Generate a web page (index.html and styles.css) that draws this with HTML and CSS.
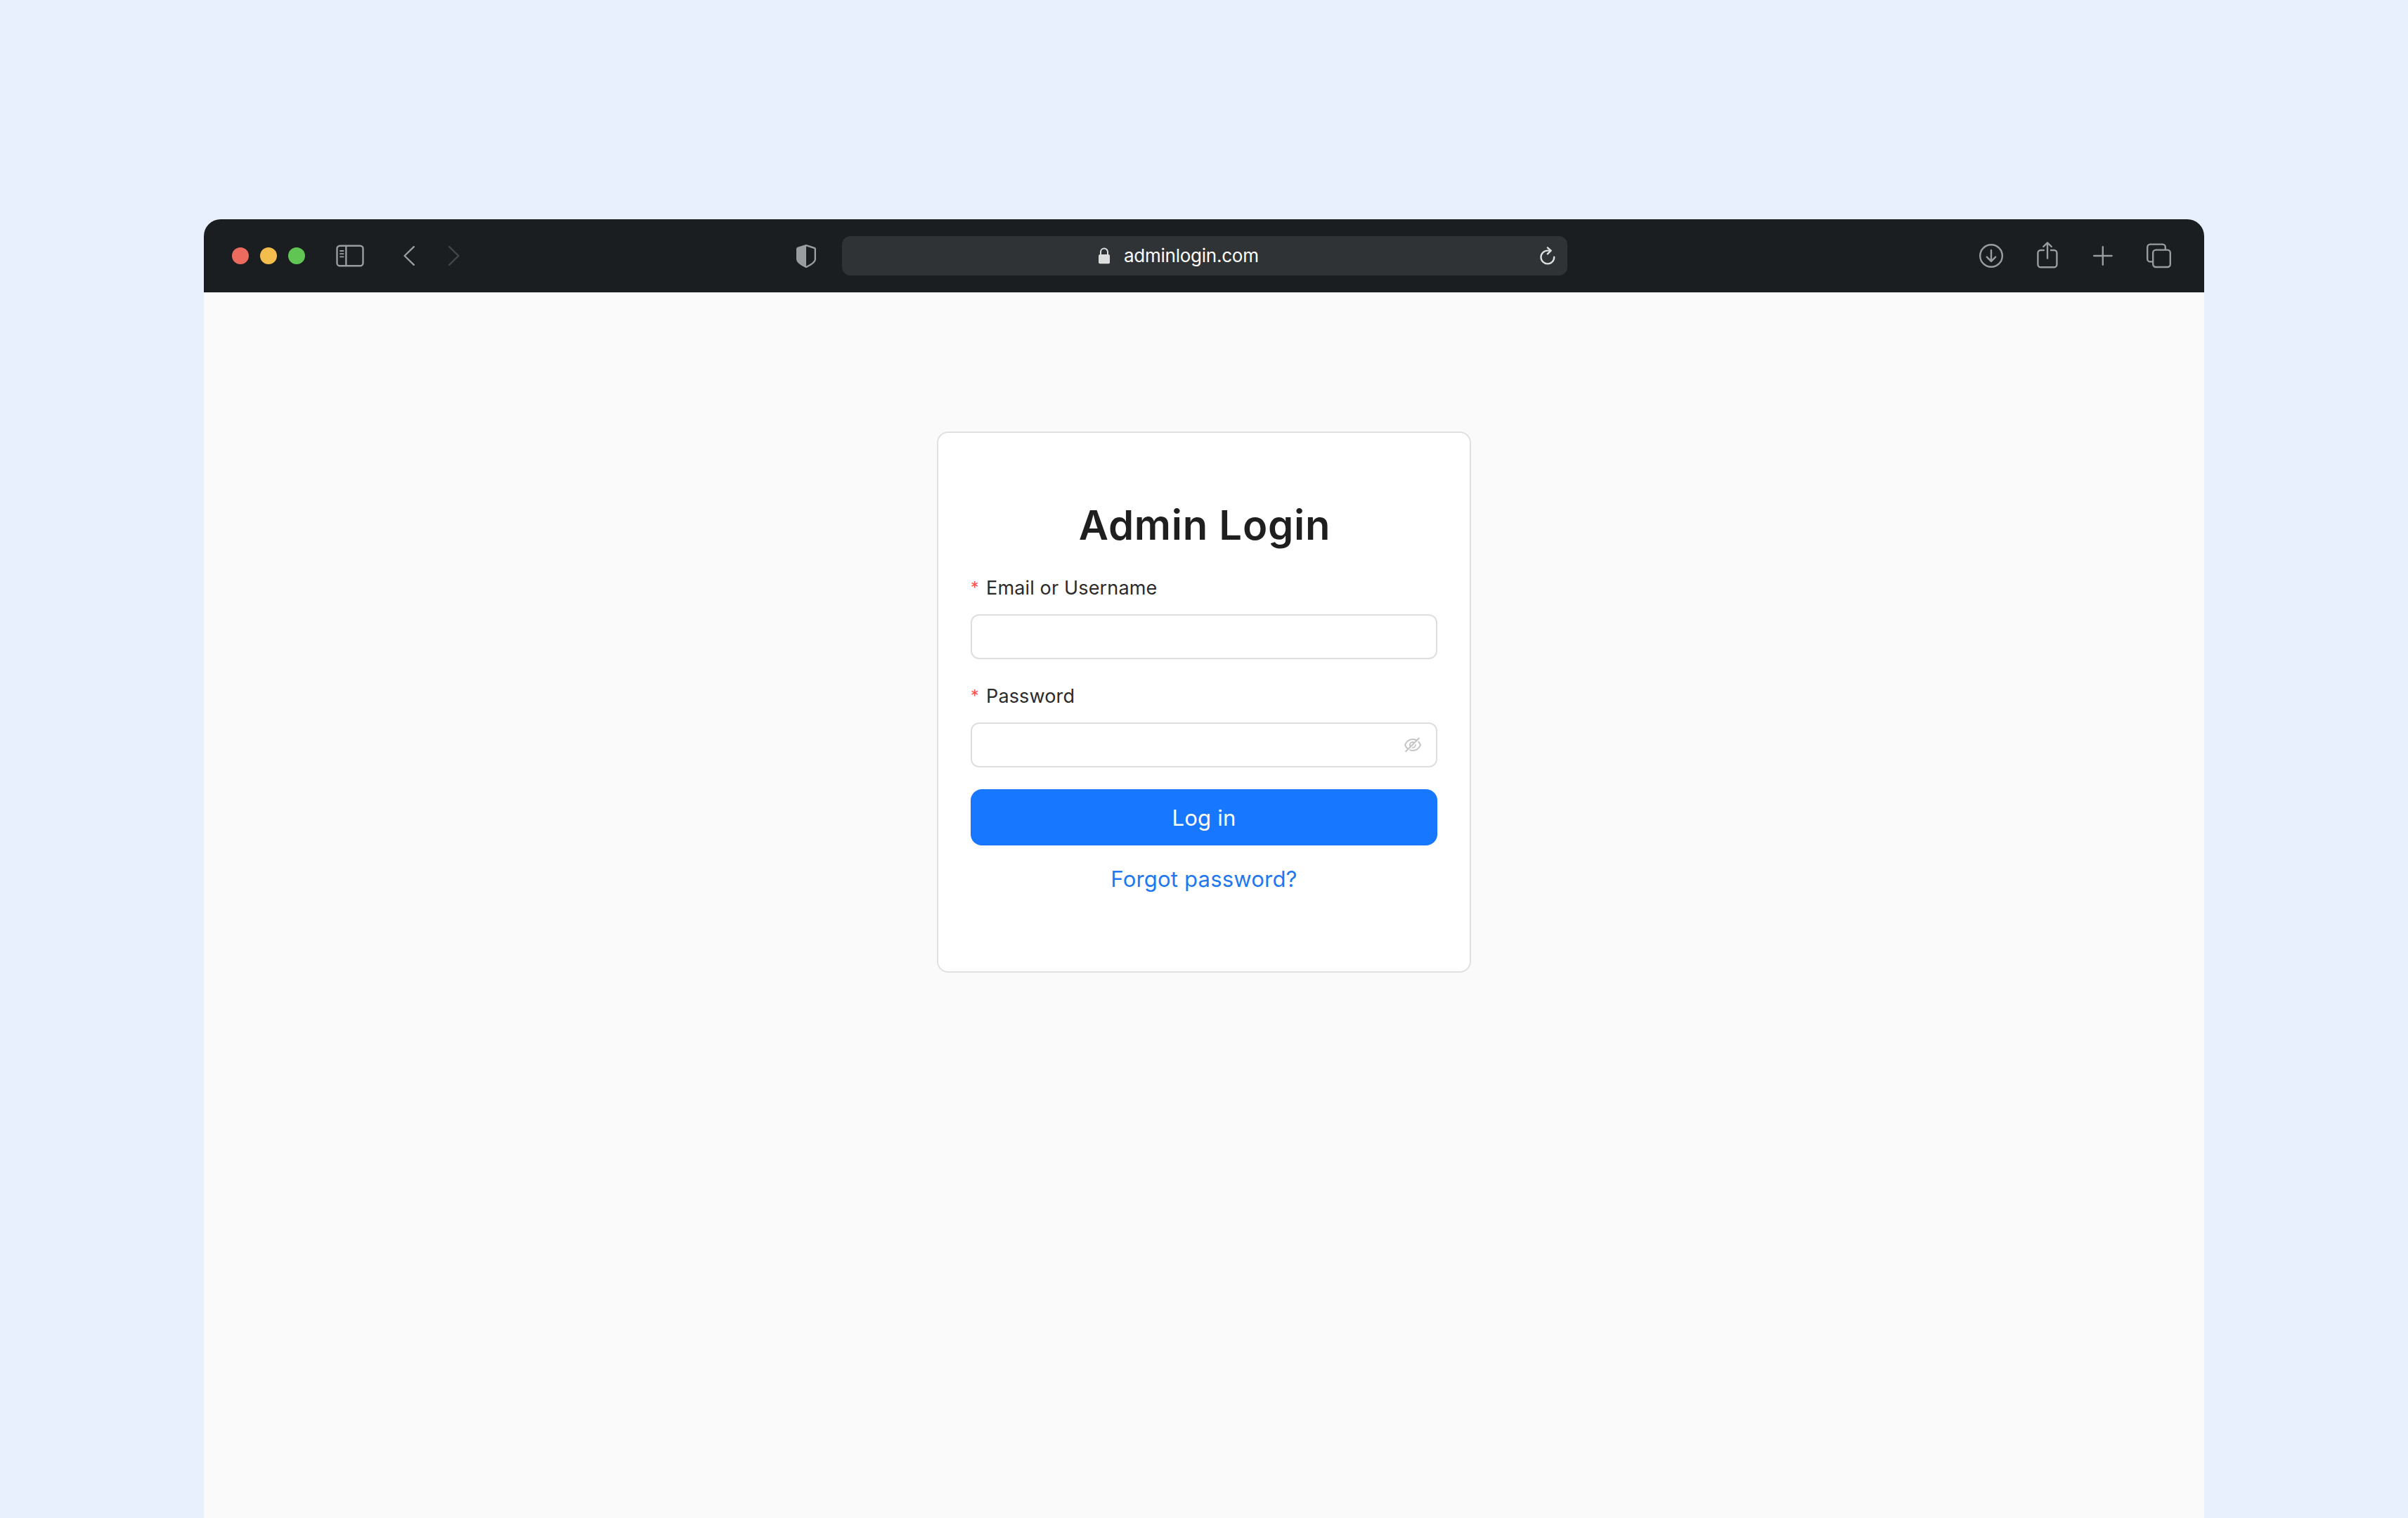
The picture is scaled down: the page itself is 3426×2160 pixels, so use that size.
FILE: index.html
```
<!doctype html>
<html lang="en">
<head>
    <meta charset="UTF-8">
    <title>Admin Login</title>
    <link rel="stylesheet" href="styles.css">
</head>
<body>
    <div class="browser">
        <div class="toolbar">
            <div class="tools-left">
                <span class="dot red"></span>
                <span class="dot yellow"></span>
                <span class="dot green"></span>
                <svg class="icon sidebar" width="40" height="32" viewBox="0 0 40 32">
                    <rect x="1.5" y="1.8" width="37" height="28.4" rx="4"/>
                    <path d="M14.4 2v28"/>
                    <path class="thin" d="M6 9h4.6M6 13.2h4.6M6 17.4h4.6"/>
                </svg>
                <svg class="icon back" width="16" height="30" viewBox="0 0 16 30"><path d="M14.8 2.2L1.6 15l13.2 12.8"/></svg>
                <svg class="icon forward" width="16" height="30" viewBox="0 0 16 30"><path d="M1.2 2.2L14.4 15 1.2 27.8"/></svg>
            </div>
            <div class="tools-center">
                <svg class="shield" width="28" height="34" viewBox="0 0 28 34">
                    <path class="line" d="M14 2.2L26 6c.5.2.8.5.8 1v15c0 4.500-6.500 8-12.800 11C7.700 30 1.200 26.500 1.200 22V7c0-.5.3-.8.8-1z"/>
                    <path class="half" d="M14 2L2 6C1.400 6.200 1 6.500 1 7v15c0 4.500 6.700 8 13 11z"/>
                </svg>
                <div class="address">
                    <svg class="lock" width="16" height="24" viewBox="0 0 16 24">
                        <path class="shackle" d="M3 11V6.500a5 5 0 0 1 10 0V11"/>
                        <rect x="0" y="10" width="16" height="13.200" rx="2"/>
                    </svg>
                    <span class="url">adminlogin.com</span>
                    <svg class="icon reload" width="22" height="28" viewBox="0 0 22 28">
                        <path d="M20.200 15.800A9.400 9.400 0 1 1 10.800 6.600h4.400"/>
                        <path d="M10.800 2.400l4.800 4.300-4.800 4.700"/>
                    </svg>
                </div>
            </div>
            <div class="tools-right">
                <svg class="icon" width="34" height="34" viewBox="0 0 34 34">
                    <circle cx="17" cy="17" r="15.800"/>
                    <path d="M17 9v15.500M10.800 18.600l6.200 6.200 6.200-6.200"/>
                </svg>
                <svg class="icon" width="30" height="40" viewBox="0 0 30 40">
                    <path d="M9.800 12H5.400a4 4 0 0 0-4 4v16.200a4 4 0 0 0 4 4h19a4 4 0 0 0 4-4V16a4 4 0 0 0-4-4H20"/>
                    <path d="M15 23.500V1.600M9.200 7L15 1.400 20.800 7"/>
                </svg>
                <svg class="icon" width="30" height="30" viewBox="0 0 30 30"><path d="M3.200 15h25.400M15.800 2.200v25.600"/></svg>
                <svg class="icon" width="35" height="36" viewBox="0 0 35 36">
                    <path d="M8.500 26.400H5.200a4 4 0 0 1-4-4V5.600a4 4 0 0 1 4-4h17.600a4 4 0 0 1 4 4v3.400"/>
                    <rect x="9.200" y="9.600" width="24.600" height="24.400" rx="4"/>
                </svg>
            </div>
        </div>
        <div class="page">
            <form class="card">
                <h1 class="title">Admin Login</h1>
                <label class="label" for="user"><span class="star">*</span>Email or Username</label>
                <div class="field"><input id="user" type="text"></div>
                <label class="label" for="pass"><span class="star">*</span>Password</label>
                <div class="field">
                    <input id="pass" type="password">
                    <svg class="eye" width="28" height="28" viewBox="0 0 1024 1024">
                        <path d="M942.2 486.2Q889.47 375.11 816.7 305l-50.88 50.88C807.31 395.53 843.45 447.4 874.7 512 791.5 684.2 673.4 766 512 766q-72.67 0-133.87-22.38L323 798.75Q408 838 512 838q288.3 0 430.2-300.3a60.29 60.29 0 000-51.5zm-63.57-320.64L836 122.88a8 8 0 00-11.32 0L715.31 232.2Q624.86 186 512 186q-288.3 0-430.2 300.3a60.3 60.3 0 000 51.5q56.69 119.4 136.5 191.41L112.48 835a8 8 0 000 11.31L155.17 889a8 8 0 0011.31 0l712.15-712.12a8 8 0 000-11.32zM149.3 512C232.6 339.8 350.7 258 512 258c54.54 0 104.13 9.36 149.12 28.39l-70.3 70.3a176 176 0 00-238.13 238.13l-83.42 83.42C223.1 637.49 183.3 582.28 149.3 512zm246.7 0a112.11 112.11 0 01146.2-106.69L401.31 546.2A112 112 0 01396 512z"/>
                        <path d="M508 624c-3.46 0-6.87-.16-10.25-.47l-52.82 52.82a176.09 176.09 0 00227.42-227.42l-52.82 52.82c.31 3.38.47 6.79.47 10.25a111.94 111.94 0 01-112 112z"/>
                    </svg>
                </div>
                <button class="login" type="button">Log in</button>
                <a class="forgot" href="#">Forgot password?</a>
            </form>
        </div>
    </div>
</body>
</html>
```
FILE: styles.css
```
*{
    margin: 0;
    padding: 0;
    box-sizing: border-box;
}
body{
    height: 2160px;
    padding: 312px 290px 0;
    background: #e8f0fe;
    font-family: Inter, "Liberation Sans", sans-serif;
    overflow: hidden;
}
.browser{
    height: 1848px;
    border-radius: 24px 24px 0 0;
    background: #fafafa;
    overflow: hidden;
}
/* toolbar */
.toolbar{
    display: grid;
    grid-template-columns: 843px 1097px 1fr;
    align-items: center;
    height: 104px;
    background: #1a1e20;
}
.tools-left,
.tools-center,
.tools-right{
    display: flex;
    align-items: center;
}
.tools-left{
    padding-left: 40px;
}
.dot{
    width: 24px;
    height: 24px;
    margin-right: 16px;
    border-radius: 50%;
}
.red{
    background: #ed6a5e;
}
.yellow{
    background: #f4be4f;
}
.green{
    background: #61c554;
}
.icon{
    fill: none;
    stroke: #9a9d9f;
    stroke-width: 2.4;
    stroke-linecap: round;
    stroke-linejoin: round;
}
.icon .thin{
    stroke-width: 1.8;
}
.sidebar{
    margin-left: 28px;
}
.back{
    margin-left: 56px;
}
.forward{
    margin-left: 48px;
    stroke: #434749;
}
.shield .half{
    fill: #9a9d9f;
}
.shield .line{
    fill: none;
    stroke: #9a9d9f;
    stroke-width: 2.4;
    stroke-linejoin: round;
}
.address{
    display: flex;
    align-items: center;
    width: 1032px;
    height: 56px;
    margin-left: 37px;
    padding: 0 17px 0 365px;
    border-radius: 12px;
    background: #2f3335;
}
.lock{
    fill: #dcdddd;
}
.lock .shackle{
    fill: none;
    stroke: #dcdddd;
    stroke-width: 2;
}
.url{
    margin-left: 20px;
    padding-bottom: 1px;
    color: #fff;
    font-size: 26px;
    letter-spacing: -.25px;
}
.reload{
    margin-left: auto;
    stroke: #dcdddd;
}
.tools-right{
    justify-content: flex-end;
    gap: 48px;
    padding-right: 47px;
}
/* login card */
.page{
    padding-top: 198px;
}
.card{
    display: flex;
    flex-direction: column;
    width: 760px;
    height: 770px;
    margin: 0 auto;
    padding: 91px 46px 0;
    border: 2px solid #e0e0e0;
    border-radius: 16px;
    background: #fff;
}
.title{
    padding-left: 2px;
    line-height: 80px;
    text-align: center;
    color: #1f1f1f;
    font-size: 58px;
    font-weight: 600;
    letter-spacing: .75px;
}
.label{
    display: flex;
    margin: 28px 0 15px;
    line-height: 44px;
    color: #2b2b2b;
    font-size: 27px;
    letter-spacing: .15px;
}
.star{
    width: 22px;
    line-height: 43px;
    color: #ff4d4f;
    font-size: 23px;
}
.field{
    display: flex;
    align-items: center;
    height: 64px;
    padding: 0 19px;
    border: 2px solid #dedede;
    border-radius: 12px;
}
.field + .label{
    margin-top: 31px;
}
.field input{
    flex: 1;
    border: 0;
    outline: 0;
    background: none;
    font-size: 28px;
}
.eye{
    fill: #c4c4c4;
}
.login{
    height: 80px;
    margin-top: 31px;
    border: 0;
    border-radius: 16px;
    background: #1877ff;
    color: #fff;
    font-family: inherit;
    font-size: 31px;
    letter-spacing: .2px;
}
.forgot{
    margin-top: 24px;
    line-height: 48px;
    text-align: center;
    text-decoration: none;
    color: #1f78f0;
    font-size: 31px;
    letter-spacing: .2px;
}
```
